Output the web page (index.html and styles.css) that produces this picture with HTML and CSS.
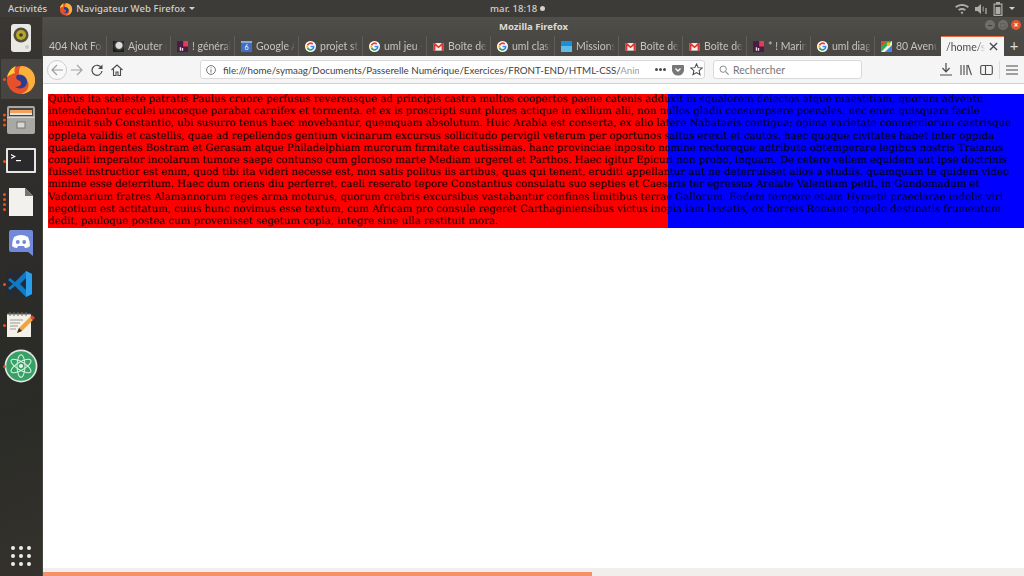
FILE: index.html

```html
<!DOCTYPE html>
<html lang="fr">
<head>
    <meta charset="UTF-8">
    <title>Mozilla Firefox</title>
    <link rel="stylesheet" href="styles.css">
</head>
<body>
    <svg class="defs" width="0" height="0">
        <symbol id="g-logo" viewBox="0 0 16 16">
            <circle cx="8" cy="8" r="8" fill="#fff"/>
            <path d="M2.6 5.2A6 6 0 0 1 12.1 3.7L10.4 5.4A3.6 3.6 0 0 0 4.7 6.8Z" fill="#ea4335"/>
            <path d="M2.6 5.2L4.7 6.8A3.6 3.6 0 0 0 4.7 9.2L2.6 10.8A6 6 0 0 1 2.6 5.2Z" fill="#fbbc05"/>
            <path d="M2.6 10.8L4.7 9.2A3.6 3.6 0 0 0 10 11L12 12.6A6 6 0 0 1 2.6 10.8Z" fill="#34a853"/>
            <path d="M8 6.8H13.8A6 6 0 0 1 12 12.6L10 11A3 3 0 0 0 11.2 9.2H8Z" fill="#4285f4"/>
        </symbol>
        <symbol id="gmail" viewBox="0 0 16 16">
            <rect x="1" y="3" width="14" height="11" fill="#f4f0ee"/>
            <path d="M1 3H3L8 7.5L13 3H15V14H12.5V6.8L8 10.5L3.5 6.8V14H1Z" fill="#d8392f"/>
        </symbol>
        <symbol id="slack" viewBox="0 0 16 16">
            <rect width="16" height="16" fill="#4a1c40"/>
            <path d="M9 0H16V8H9Z" fill="#e8385e"/>
            <path d="M4 9H6V14H4ZM7 10H9V14H7Z" fill="#e9dce5"/>
        </symbol>
        <symbol id="ff-logo" viewBox="0 0 32 32">
            <circle cx="16" cy="17" r="14" fill="#e8502a"/>
            <path d="M16 3C24 3 31 9 30 19C29 26 23 31 16 31C22 29 25 24 23 19C21 14 16 15 13 13C15 9 13 6 16 3Z" fill="#fbb03b"/>
            <path d="M12 12C17 10 23 14 22 20C21 25 15 27 10 24C15 24 18 21 15 18C12 17 10 15 12 12Z" fill="#2c3c8f"/>
            <path d="M2 14C4 7 8 4 11 3C9 6 9 8 10 10C7 11 4 12 2 14Z" fill="#ffcb3d"/>
        </symbol>
    </svg>

    <div class="top-bar">
        <span class="activities">Activités</span>
        <span class="app-menu">
            <svg width="14" height="14"><use href="#ff-logo"/></svg>
            Navigateur Web Firefox
            <i class="caret"></i>
        </span>
        <span class="clock">mar. 18:18 <i class="clock-dot"></i></span>
        <span class="status">
            <svg width="14" height="12" viewBox="0 0 14 12"><path d="M0 3.5C4 0 10 0 14 3.5L12.6 5C9.5 2.4 4.5 2.4 1.4 5ZM3 6.4C5.4 4.4 8.6 4.4 11 6.4L9.6 7.8C8 6.6 6 6.6 4.4 7.8ZM5.6 9.2C6.5 8.6 7.5 8.6 8.4 9.2L7 11.5Z" fill="#aeaca7"/></svg>
            <svg width="14" height="12" viewBox="0 0 14 12"><path d="M1 4H3.5L7 1V11L3.5 8H1Z" fill="#aeaca7"/><path d="M8.5 3.5H10V8.5H8.5ZM11 5H13V11H11Z" fill="#85837e"/></svg>
            <svg width="10" height="14" viewBox="0 0 10 14"><path d="M3 0H7V1.5H9.5V14H.5V1.5H3ZM1.7 2.8V12.8H8.3V2.8Z" fill="#aeaca7"/><rect x="2.6" y="5" width="4.8" height="7" fill="#aeaca7"/></svg>
            <i class="caret"></i>
        </span>
    </div>

    <div class="desktop">
        <nav class="dock">
            <div class="dock-item">
                <svg width="24" height="30" viewBox="0 0 24 30"><rect x="2" y="1" width="20" height="28" rx="3" fill="#e8e8e4"/><circle cx="12" cy="12" r="7.5" fill="#55503a"/><circle cx="12" cy="12" r="5" fill="#b7a52c"/><circle cx="12" cy="12" r="1.8" fill="#3d3a2a"/><circle cx="18" cy="24" r="2" fill="#c9c9c5"/></svg>
            </div>
            <div class="dock-item dock-active">
                <i class="pip"></i>
                <svg width="32" height="32"><use href="#ff-logo"/></svg>
            </div>
            <div class="dock-item">
                <span class="pips"><i class="pip"></i><i class="pip"></i><i class="pip"></i></span>
                <svg width="30" height="30" viewBox="0 0 30 30"><rect x="1" y="1" width="28" height="28" rx="2" fill="#a9a8a3"/><rect x="3" y="3" width="24" height="8" fill="#4a4643"/><rect x="4" y="5" width="22" height="3" fill="#f0a35e"/><rect x="4" y="8" width="22" height="2" fill="#e8e5df"/><rect x="1" y="12" width="28" height="1" fill="#d6d5d0"/><rect x="11" y="17" width="8" height="6" fill="#d9d8d4" stroke="#77767a"/></svg>
            </div>
            <div class="dock-item">
                <i class="pip"></i>
                <svg width="30" height="26" viewBox="0 0 30 26"><rect x="0" y="0" width="30" height="25" rx="1" fill="#e6e6e3"/><rect x="2" y="2" width="26" height="21" fill="#2a2a2c"/><path d="M5 6L10 8.5L5 11V9.8L7.6 8.5L5 7.2Z" fill="#fff"/><rect x="10" y="12" width="5" height="1.2" fill="#fff"/></svg>
            </div>
            <div class="dock-item">
                <span class="pips"><i class="pip"></i><i class="pip"></i><i class="pip"></i><i class="pip"></i></span>
                <svg width="26" height="30" viewBox="0 0 26 30"><path d="M1 1H17L25 9V29H1Z" fill="#f2f1ee"/><path d="M17 1L25 9H17Z" fill="#75736f"/></svg>
            </div>
            <div class="dock-item">
                <svg width="26" height="26" viewBox="0 0 26 26"><path d="M3 0H23Q25 0 25 2V26L20 22H3Q1 22 1 20V2Q1 0 3 0Z" fill="#7289da"/><path d="M6 7Q13 3 20 7Q22 11 22 16Q20 18 17 18L16 16H10L9 18Q6 18 4 16Q4 11 6 7Z" fill="#fff"/><circle cx="9.8" cy="12" r="1.9" fill="#7289da"/><circle cx="16.2" cy="12" r="1.9" fill="#7289da"/></svg>
            </div>
            <div class="dock-item">
                <i class="pip"></i>
                <svg width="28" height="28" viewBox="0 0 28 28"><rect x="0" y="1" width="26" height="26" fill="#252a33"/><path d="M19 1L25 4V24L19 27L8 16L3 20L1 18L6 14L1 10L3 8L8 12Z" fill="#0f7ac6"/><path d="M19 8L13 14L19 20Z" fill="#252a33"/><path d="M19 1L25 4V24L19 27Z" fill="#2aa0ea"/></svg>
            </div>
            <div class="dock-item">
                <i class="pip"></i>
                <svg width="30" height="28" viewBox="0 0 30 28"><rect x="1" y="3" width="24" height="23" fill="#f3f1e8"/><path d="M1 3H25M4 1V5M8 1V5M12 1V5M16 1V5M20 1V5" stroke="#6b6a66"/><path d="M4 9H17M4 12H14M4 15H12M4 18H10" stroke="#9a9994"/><path d="M11 22L13 17L24 6L27 9L16 20Z" fill="#f0a23c"/><path d="M24 6L26 4L29 7L27 9Z" fill="#d9463e"/><path d="M11 22L13 17L16 20Z" fill="#333"/></svg>
            </div>
            <div class="dock-item">
                <i class="pip"></i>
                <svg width="34" height="34" viewBox="0 0 30 30"><circle cx="15" cy="15" r="14.5" fill="#e6e6e2"/><circle cx="15" cy="15" r="13" fill="#36a066"/><g fill="none" stroke="#d5f0de" stroke-width="0.9"><ellipse cx="15" cy="15" rx="10" ry="3.5" transform="rotate(30 15 15)"/><ellipse cx="15" cy="15" rx="10" ry="3.5" transform="rotate(-30 15 15)"/><ellipse cx="15" cy="15" rx="10" ry="3.5" transform="rotate(90 15 15)"/></g><circle cx="15" cy="15" r="1.8" fill="#e4f6ea"/></svg>
            </div>
            <div class="dock-apps">
                <i></i><i></i><i></i><i></i><i></i><i></i><i></i><i></i><i></i>
            </div>
        </nav>

        <div class="browser">
            <header class="title-bar">
                <span class="title-text">Mozilla Firefox</span>
                <span class="win-btns">
                    <i class="win-btn">&#8211;</i>
                    <i class="win-btn">&#9633;</i>
                    <i class="win-btn win-close">&#215;</i>
                </span>
            </header>

            <div class="tabs">
                <div class="tab"><span class="tab-label">404 Not Found</span></div>
                <div class="tab"><i class="fav-photo"></i><span class="tab-label">Ajouter un</span></div>
                <div class="tab"><svg class="fav"><use href="#slack"/></svg><span class="tab-label">! général</span></div>
                <div class="tab"><i class="fav-cal">6</i><span class="tab-label">Google Ag</span></div>
                <div class="tab"><svg class="fav"><use href="#g-logo"/></svg><span class="tab-label">projet st</span></div>
                <div class="tab"><svg class="fav"><use href="#g-logo"/></svg><span class="tab-label">uml jeu -</span></div>
                <div class="tab"><svg class="fav"><use href="#gmail"/></svg><span class="tab-label">Boîte de</span></div>
                <div class="tab"><svg class="fav"><use href="#g-logo"/></svg><span class="tab-label">uml class</span></div>
                <div class="tab"><i class="fav-mission"></i><span class="tab-label">Missions</span></div>
                <div class="tab"><svg class="fav"><use href="#gmail"/></svg><span class="tab-label">Boîte de</span></div>
                <div class="tab"><svg class="fav"><use href="#gmail"/></svg><span class="tab-label">Boîte de</span></div>
                <div class="tab"><svg class="fav"><use href="#slack"/></svg><span class="tab-label">* ! Marin</span></div>
                <div class="tab"><svg class="fav"><use href="#g-logo"/></svg><span class="tab-label">uml diag</span></div>
                <div class="tab tab-last">
                    <svg class="fav" viewBox="0 0 16 16"><rect width="16" height="16" fill="#34a853"/><path d="M0 16L16 0V6L6 16Z" fill="#f4f1ea"/><path d="M0 0H8L0 8Z" fill="#ea4335"/><path d="M6 16L16 6V16Z" fill="#4285f4"/><circle cx="11" cy="4.5" r="2.6" fill="#fbbc05"/></svg>
                    <span class="tab-label">80 Avenue</span>
                </div>
                <div class="tab tab-active">
                    <span class="tab-label">/home/sym</span>
                    <svg class="tab-close" width="9" height="9" viewBox="0 0 10 10"><path d="M1 1L9 9M9 1L1 9" stroke="#4a4a4f" stroke-width="1.5"/></svg>
                </div>
                <div class="tab-new">+</div>
            </div>

            <div class="nav-bar">
                <span class="back-btn">
                    <svg width="12" height="12" viewBox="0 0 12 12"><path d="M6 1L1 6L6 11M1 6H12" fill="none" stroke="#9c9c9e" stroke-width="1.2"/></svg>
                </span>
                <svg class="nav-icon fwd-icon" width="12" height="12" viewBox="0 0 12 12"><path d="M6 1L11 6L6 11M11 6H0" fill="none" stroke="#a4a4a6" stroke-width="1.2"/></svg>
                <svg class="nav-icon" width="12" height="12" viewBox="0 0 12 12"><path d="M10.5 4A5 5 0 1 0 11 7" fill="none" stroke="#4a4a4f" stroke-width="1.2"/><path d="M11.5 0.5V5H7Z" fill="#4a4a4f"/></svg>
                <svg class="nav-icon" width="12" height="12" viewBox="0 0 12 12"><path d="M0.5 6L6 1L11.5 6M2.5 5V11.5H5V8H7V11.5H9.5V5" fill="none" stroke="#4a4a4f" stroke-width="1.1"/></svg>

                <div class="url-bar">
                    <svg class="url-info" width="10" height="10" viewBox="0 0 10 10"><circle cx="5" cy="5" r="4.4" fill="none" stroke="#77777a"/><path d="M5 4.4V7.6M5 2.4V3.4" stroke="#77777a"/></svg>
                    <span class="url-text">file:///home/symaag/Documents/Passerelle Numérique/Exercices/FRONT-END/HTML-CSS/<span class="url-fade">Anim</span></span>
                    <span class="url-dots"><i></i><i></i><i></i></span>
                    <svg class="pocket" width="12" height="12" viewBox="0 0 12 12"><path d="M1 1H11Q12 1 12 2V6A6 5.5 0 0 1 0 6V2Q0 1 1 1Z" fill="#77777a"/><path d="M3.5 4.5L6 7L8.5 4.5" fill="none" stroke="#fff" stroke-width="1.3"/></svg>
                    <svg class="star" width="13" height="13" viewBox="0 0 14 14"><path d="M7 1L8.8 5L13 5.4L9.8 8.2L10.8 12.6L7 10.3L3.2 12.6L4.2 8.2L1 5.4L5.2 5Z" fill="none" stroke="#4a4a4f" stroke-width="1.1"/></svg>
                </div>

                <div class="search-bar">
                    <svg width="10" height="10" viewBox="0 0 12 12"><circle cx="5" cy="5" r="3.8" fill="none" stroke="#8c8c8f" stroke-width="1.2"/><path d="M8 8L11.5 11.5" stroke="#8c8c8f" stroke-width="1.4"/></svg>
                    <span>Rechercher</span>
                </div>

                <div class="tools">
                    <svg width="12" height="13" viewBox="0 0 12 13"><path d="M6 0V8M2.5 5L6 8.8L9.5 5M0 12H12" fill="none" stroke="#4a4a4f" stroke-width="1.2"/></svg>
                    <svg width="12" height="12" viewBox="0 0 12 12"><path d="M1 1V11M4 1V11M7 1V11M8 1L11.5 11" fill="none" stroke="#4a4a4f" stroke-width="1.1"/></svg>
                    <svg width="13" height="12" viewBox="0 0 13 12"><rect x="0.7" y="1.5" width="11.6" height="9" rx="1.5" fill="none" stroke="#4a4a4f" stroke-width="1.1"/><path d="M5.5 2V10" stroke="#4a4a4f" stroke-width="1.1"/></svg>
                    <i class="tool-sep"></i>
                    <svg width="12" height="10" viewBox="0 0 12 10"><path d="M0 1H12M0 5H12M0 9H12" stroke="#4a4a4f" stroke-width="1.2"/></svg>
                </div>
            </div>

            <main class="page">
                <div class="anim-block">
                    Quibus ita sceleste patratis Paulus cruore perfusus reversusque ad principis castra multos coopertos paene catenis adduxit in squalorem deiectos atque maestitiam, quorum adventu intendebantur eculei uncosque parabat carnifex et tormenta. et ex is proscripti sunt plures actique in exilium alii, non nullos gladii consumpsere poenales. nec enim quisquam facile meminit sub Constantio, ubi susurro tenus haec movebantur, quemquam absolutum. Huic Arabia est conserta, ex alio latere Nabataeis contigua; opima varietate conmerciorum castrisque oppleta validis et castellis, quae ad repellendos gentium vicinarum excursus sollicitudo pervigil veterum per oportunos saltus erexit et cautos. haec quoque civitates habet inter oppida quaedam ingentes Bostram et Gerasam atque Philadelphiam murorum firmitate cautissimas. hanc provinciae inposito nomine rectoreque adtributo obtemperare legibus nostris Traianus conpulit imperator incolarum tumore saepe contunso cum glorioso marte Mediam urgeret et Parthos. Haec igitur Epicuri non probo, inquam. De cetero vellem equidem aut ipse doctrinis fuisset instructior est enim, quod tibi ita videri necesse est, non satis politus iis artibus, quas qui tenent, eruditi appellantur aut ne deterruisset alios a studiis. quamquam te quidem video minime esse deterritum. Haec dum oriens diu perferret, caeli reserato tepore Constantius consulatu suo septies et Caesaris ter egressus Arelate Valentiam petit, in Gundomadum et Vadomarium fratres Alamannorum reges arma moturus, quorum crebris excursibus vastabantur confines limitibus terrae Gallorum. Eodem tempore etiam Hymetii praeclarae indolis viri negotium est actitatum, cuius hunc novimus esse textum, cum Africam pro consule regeret Carthaginiensibus victus inopia iam lassatis, ex horreis Romano populo destinatis frumentum dedit, pauloque postea cum provenisset segetum copia, integre sine ulla restituit mora.
                </div>
            </main>

            <div class="progress-bar"><div class="progress-fill"></div></div>
        </div>
    </div>
</body>
</html>
```

FILE: styles.css

```css
/* page */
html, body {
    margin: 0;
    padding: 0;
    height: 100%;
    overflow: hidden;
}

body {
    display: flex;
    flex-direction: column;
    font-family: "Noto Sans", "Open Sans", sans-serif;
    background-color: #fff;
}

i {
    font-style: normal;
}

.defs {
    position: absolute;
}

/* ubuntu top bar */
.top-bar {
    display: flex;
    align-items: center;
    position: relative;
    height: 17px;
    flex-shrink: 0;
    padding: 0 9px 0 8px;
    background-color: #3c3b37;
    color: #d3d1cc;
    font-size: 9.5px;
    font-weight: 500;
    letter-spacing: 0.1px;
}

.activities {
    margin-right: 12px;
}

.app-menu {
    display: flex;
    align-items: center;
    gap: 3px;
}

.caret {
    display: inline-block;
    width: 0;
    height: 0;
    margin-left: 1px;
    border-left: 3px solid transparent;
    border-right: 3px solid transparent;
    border-top: 3px solid #d3d1cc;
}

.clock {
    position: absolute;
    left: 490px;
    display: flex;
    align-items: center;
    gap: 3px;
}

.clock-dot {
    width: 5px;
    height: 5px;
    border-radius: 50%;
    background-color: #d3d1cc;
}

.status {
    display: flex;
    align-items: center;
    gap: 5px;
    margin-left: auto;
}

/* launcher */
.desktop {
    display: flex;
    flex: 1;
    min-height: 0;
}

.dock {
    display: flex;
    flex-direction: column;
    align-items: center;
    width: 43px;
    flex-shrink: 0;
    box-sizing: border-box;
    padding-top: 1px;
    background-color: #2e2c29;
    background-image: linear-gradient(160deg, #3a3733 0%, #2d2c2a 35%, #2a2b27 70%, #35322d 100%);
    border-right: 1px solid #47453f;
}

.dock-item {
    display: flex;
    align-items: center;
    justify-content: center;
    position: relative;
    width: 41px;
    height: 40px;
    margin-bottom: 1px;
}

.dock-active {
    background-color: rgba(255, 255, 255, 0.09);
}

.pip {
    display: block;
    width: 3px;
    height: 3px;
    border-radius: 50%;
    background-color: #e95420;
}

.dock-item > .pip {
    position: absolute;
    left: 2px;
    top: 19px;
}

.pips {
    display: flex;
    flex-direction: column;
    gap: 2px;
    position: absolute;
    left: 2px;
    top: 50%;
    transform: translateY(-50%);
}

.dock-apps {
    display: grid;
    grid-template-columns: repeat(3, 4px);
    gap: 4px;
    margin-top: auto;
    margin-bottom: 10px;
}

.dock-apps i {
    width: 4px;
    height: 4px;
    border-radius: 50%;
    background-color: #eeeeec;
}

/* firefox window */
.browser {
    display: flex;
    flex-direction: column;
    flex: 1;
    min-width: 0;
}

.title-bar {
    display: flex;
    align-items: center;
    justify-content: center;
    position: relative;
    height: 19px;
    flex-shrink: 0;
    background-image: linear-gradient(#504e49, #4a4844);
    color: #dfdbd2;
    font-size: 9.5px;
    font-weight: 700;
}

.win-btns {
    display: flex;
    gap: 3px;
    position: absolute;
    right: 3px;
    top: 3px;
}

.win-btn {
    width: 10px;
    height: 10px;
    border-radius: 50%;
    background-color: #6f6e69;
    color: #3c3b37;
    font-size: 8px;
    line-height: 10px;
    text-align: center;
}

.win-close {
    background-color: #e2572b;
    color: #fff;
}

/* tabs */
.tabs {
    display: flex;
    height: 20px;
    flex-shrink: 0;
    background-color: #4a4844;
    color: #c6c4bf;
    font-family: Lato, "Noto Sans", sans-serif;
    font-size: 10.5px;
}

.tab {
    display: flex;
    align-items: center;
    gap: 4px;
    box-sizing: border-box;
    width: 64px;
    height: 20px;
    padding: 0 3px 0 6px;
    border-right: 1px solid #5f5d58;
    overflow: hidden;
}

.tab-last {
    border-right: none;
    width: 66px;
}

.tab-label {
    flex: 1;
    min-width: 0;
    white-space: nowrap;
    overflow: hidden;
    -webkit-mask-image: linear-gradient(to right, #000 80%, transparent 100%);
    mask-image: linear-gradient(to right, #000 80%, transparent 100%);
}

.fav, .fav-photo, .fav-cal, .fav-mission {
    display: block;
    width: 11px;
    height: 11px;
    flex-shrink: 0;
}

.fav-photo {
    background-color: #1d1d1d;
    background-image: radial-gradient(circle at 55% 40%, #ddd 0 3px, #444 4px, #1d1d1d 6px);
}

.fav-cal {
    background-color: #3f6fc4;
    border-top: 2px solid #86a9e0;
    box-sizing: border-box;
    color: #fff;
    font-size: 7px;
    line-height: 9px;
    text-align: center;
}

.fav-mission {
    background-image: linear-gradient(#1a8fd8 45%, #5fbbe8 45%);
}

.tab-active {
    width: 63px;
    height: 20px;
    background-color: #f5f5f5;
    border-top: 1px solid #e96a3a;
    border-right: none;
    color: #4a4a4f;
    padding: 0 5px 0 5px;
}

.tab-close {
    flex-shrink: 0;
    margin-right: 1px;
}

.tab-new {
    flex: 1;
    color: #dedcd7;
    font-size: 15px;
    line-height: 19px;
    text-align: center;
}

/* navigation toolbar */
.nav-bar {
    display: flex;
    align-items: center;
    box-sizing: border-box;
    height: 28px;
    flex-shrink: 0;
    padding: 0 6px 0 4px;
    background-color: #f5f5f5;
    border-bottom: 1px solid #d0d0d0;
}

.back-btn {
    display: flex;
    align-items: center;
    justify-content: center;
    box-sizing: border-box;
    width: 20px;
    height: 20px;
    border: 1px solid #cfcfcf;
    border-radius: 50%;
    background-color: #f9f9f9;
}

.nav-icon {
    margin-left: 8px;
}

.nav-icon.fwd-icon {
    margin-left: 4px;
}

.url-bar {
    display: flex;
    align-items: center;
    box-sizing: border-box;
    width: 505px;
    height: 19px;
    margin-left: 77px;
    padding: 0 1px 0 5px;
    background-color: #fff;
    border: 1px solid #d9d9d9;
    border-radius: 3px;
    color: #3f3f42;
    font-family: Lato, "Noto Sans", sans-serif;
    font-size: 9.8px;
}

.url-info {
    flex-shrink: 0;
}

.url-text {
    width: 416px;
    margin-left: 7px;
    white-space: nowrap;
    overflow: hidden;
}

.url-fade {
    color: #a0a0a2;
}

.url-dots {
    display: flex;
    gap: 1px;
    margin-left: 16px;
}

.url-dots i {
    width: 3px;
    height: 3px;
    border-radius: 50%;
    background-color: #4a4a4f;
}

.pocket {
    margin-left: 6px;
}

.star {
    margin-left: 6px;
}

.search-bar {
    display: flex;
    align-items: center;
    gap: 4px;
    box-sizing: border-box;
    width: 149px;
    height: 19px;
    margin-left: 8px;
    padding-left: 5px;
    background-color: #fff;
    border: 1px solid #d9d9d9;
    border-radius: 3px;
    color: #77777a;
    font-family: Lato, "Noto Sans", sans-serif;
    font-size: 10.5px;
}

.tools {
    display: flex;
    align-items: center;
    gap: 8px;
    margin-left: auto;
}

.tool-sep {
    width: 1px;
    height: 18px;
    margin: 0 -2px;
    background-color: #dcdcdc;
}

/* page content */
.page {
    flex: 1;
    min-height: 0;
    padding: 10px 0 0 5px;
    background-color: #fff;
}

.anim-block {
    box-sizing: border-box;
    height: 134px;
    padding-right: 5px;
    background-image: linear-gradient(to right, #ff0000 620px, #0000ff 620px);
    color: #000;
    font-family: "DejaVu Serif", serif;
    font-size: 10.13px;
    line-height: 12.18px;
    text-rendering: geometricPrecision;
}

.progress-bar {
    height: 8px;
    flex-shrink: 0;
    box-sizing: border-box;
    padding-top: 4px;
    background-color: #f0efed;
}

.progress-fill {
    width: 549px;
    height: 4px;
    background-color: #f79068;
}
```
